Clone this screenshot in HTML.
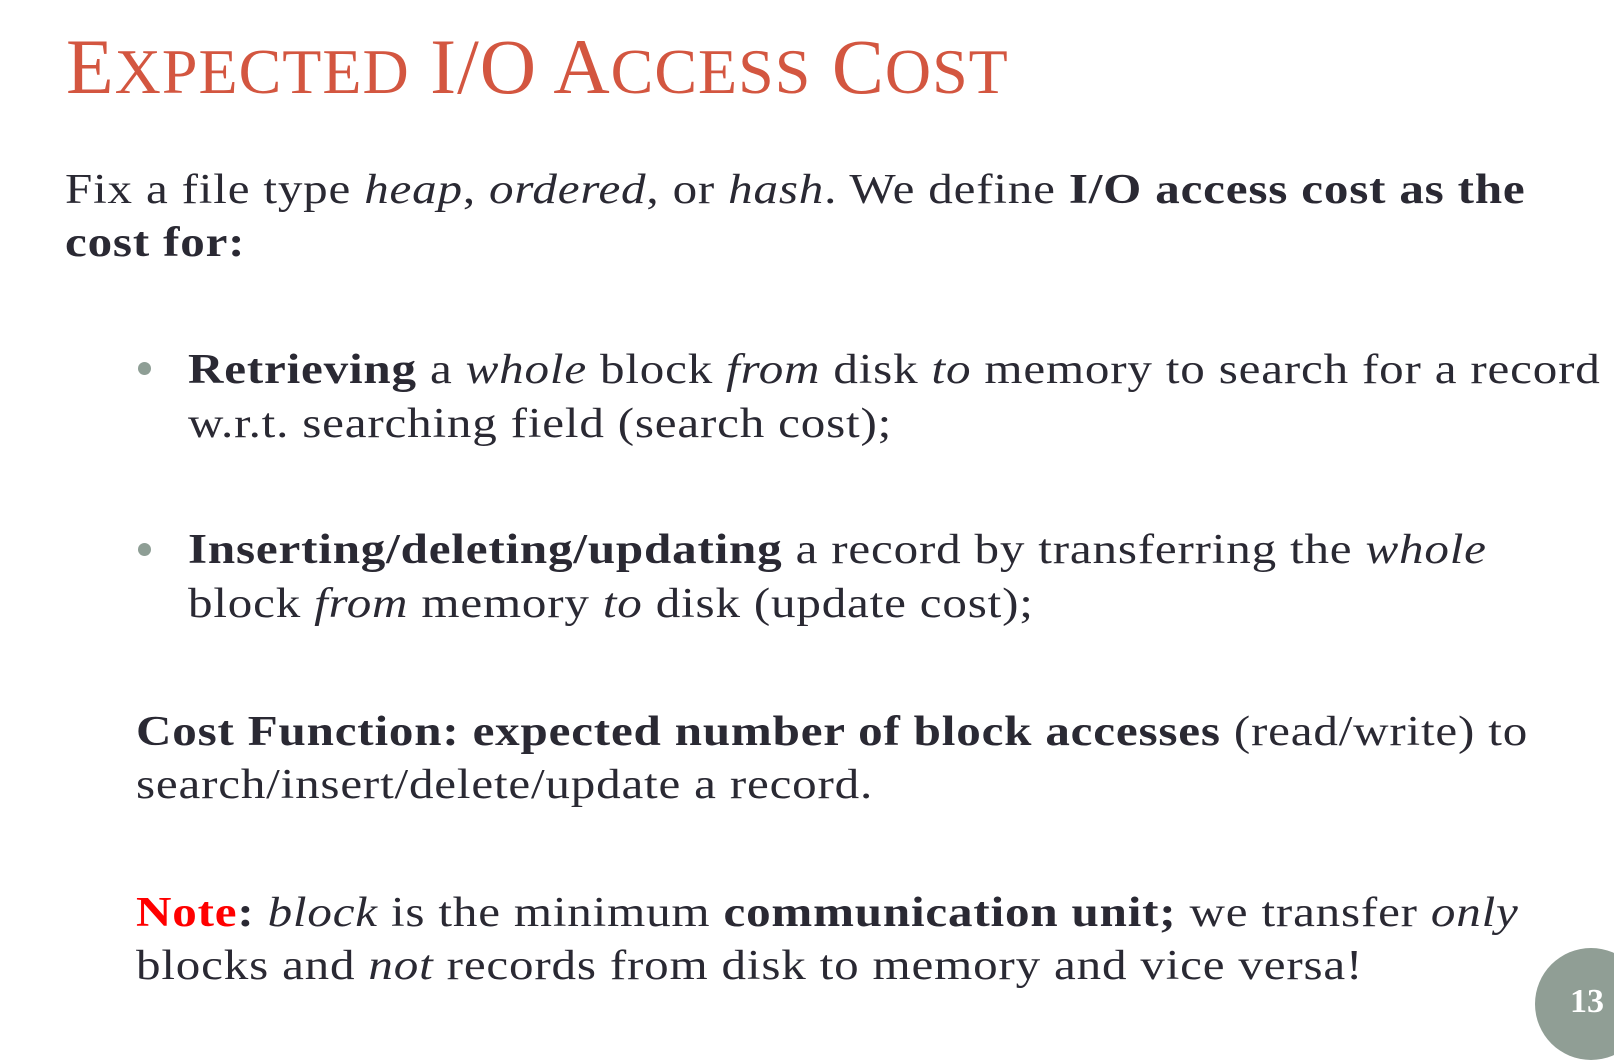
<!DOCTYPE html>
<html><head><meta charset="utf-8">
<style>
html,body{margin:0;padding:0;background:#fff;}
body{width:1614px;height:1027px;position:relative;overflow:hidden;font-family:"Liberation Serif",serif;color:#2a2933;}
.l{position:absolute;white-space:nowrap;font-size:42px;line-height:1.107;letter-spacing:0.7px;transform:scaleX(1.168);transform-origin:0 0;}
.t{position:absolute;white-space:nowrap;color:#d35640;font-size:78px;line-height:1.107;left:66px;top:24px;letter-spacing:1px;}
.t .s{font-size:64px;}
.dot{position:absolute;width:13px;height:13px;border-radius:50%;background:#8e9e95;}
.circ{position:absolute;left:1535px;top:948px;width:112px;height:112px;border-radius:50%;background:#909e95;}
.num{position:absolute;left:1570px;top:983px;color:#fff;font-weight:bold;font-size:34px;line-height:1.107;}
b{font-weight:bold;}
</style></head><body>
<div class="t">E<span class="s">XPECTED</span> I/O A<span class="s">CCESS</span> C<span class="s">OST</span></div>

<div class="l" style="left:65px;top:167px;">Fix a file type <i>heap</i>, <i>ordered</i>, or <i>hash</i>. We define <b>I/O access cost as the</b></div>
<div class="l" style="left:65px;top:220px;"><b>cost for:</b></div>

<div class="dot" style="left:138px;top:362px;"></div>
<div class="l" style="left:188px;top:347px;"><b>Retrieving</b> a <i>whole</i> block <i>from</i> disk <i>to</i> memory to search for a record</div>
<div class="l" style="left:188px;top:401px;">w.r.t. searching field (search cost);</div>

<div class="dot" style="left:138px;top:543px;"></div>
<div class="l" style="left:188px;top:527px;"><b>Inserting/deleting/updating</b> a record by transferring the <i>whole</i></div>
<div class="l" style="left:188px;top:581px;">block <i>from</i> memory <i>to</i> disk (update cost);</div>

<div class="l" style="left:136px;top:709px;"><b>Cost Function: expected number of block accesses</b> (read/write) to</div>
<div class="l" style="left:136px;top:762px;">search/insert/delete/update a record.</div>

<div class="l" style="left:136px;top:890px;"><b><span style="color:#f00">Note</span>:</b> <i>block</i> is the minimum <b>communication unit;</b> we transfer <i>only</i></div>
<div class="l" style="left:136px;top:943px;">blocks and <i>not</i> records from disk to memory and vice versa!</div>

<div class="circ"></div>
<div class="num">13</div>
</body></html>
